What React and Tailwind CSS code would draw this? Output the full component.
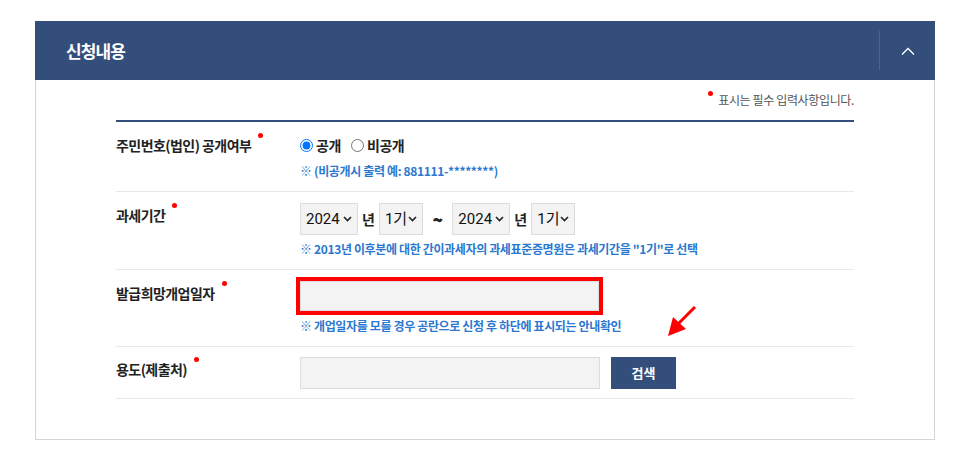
import {useState} from 'react';

const KR = "font-['Noto_Sans_CJK_KR',sans-serif]";

function Req() {
  return <span className="relative -top-[10px] ml-[7px] inline-block h-[5px] w-[5px] rounded-full bg-[#ff0000]" />;
}

function Label({children}) {
  return (
    <div className="flex h-[24px] items-center text-[14px] font-bold tracking-[-0.04em] text-[#222]">
      {children}
      <Req />
    </div>
  );
}

function Hint({children}) {
  return <p className="mt-[5px] text-[12px] font-bold leading-[18px] tracking-[-0.03em] text-[#2b78d0]">{children}</p>;
}

function Select({value, options, width}) {
  return (
    <label className={`relative inline-flex h-[32px] ${width}`}>
      <select
        defaultValue={value}
        className="h-full w-full appearance-none border border-[#dcdcdc] bg-[#f3f3f3] pl-[5px] font-['Roboto','Noto_Sans_CJK_KR',sans-serif] text-[15px] font-normal tracking-normal text-[#111] outline-none"
      >
        {options.map((o) => (
          <option key={o}>{o}</option>
        ))}
      </select>
      <svg className="pointer-events-none absolute right-[6px] top-[13px]" width="9" height="6" viewBox="0 0 9 6">
        <path d="M1 1l3.5 3.5L8 1" fill="none" stroke="#222" strokeWidth="1.6" />
      </svg>
    </label>
  );
}

function Row({label, children, className = 'py-[11px]'}) {
  return (
    <div className={`grid grid-cols-[184px_1fr] border-b border-[#e8e8e8] ${className}`}>
      <Label>{label}</Label>
      <div>{children}</div>
    </div>
  );
}

export default function App() {
  const [open, setOpen] = useState('yes');
  return (
    <div className={`min-h-[465px] bg-white pt-[21px] ${KR}`}>
      <section className="mx-[35px] w-[900px]">
        <header className="flex h-[59px] items-center bg-[#344e7b] pl-[31px]">
          <h2 className="flex-1 text-[17px] font-bold tracking-[-0.05em] text-white">신청내용</h2>
          <div className="h-[39px] w-px bg-[#4b6591]" />
          <button className="flex h-full w-[55px] items-center justify-center">
            <svg width="14" height="8" viewBox="0 0 14 8">
              <path d="M1 7.5L7 1.5l6 6" fill="none" stroke="#fff" strokeWidth="1.3" />
            </svg>
          </button>
        </header>

        <div className="border border-t-0 border-[#d5d5d5] px-[80px] pb-[40px]">
          <div className="flex h-[42px] items-center justify-end border-b-2 border-[#344e7b] text-[12px] tracking-[-0.03em] text-[#555]">
            <span className="relative -top-[7px] mr-[5px] inline-block h-[5px] w-[5px] rounded-full bg-[#ff0000]" />
            표시는 필수 입력사항입니다.
          </div>

          <Row label="주민번호(법인) 공개여부">
            <div className="flex h-[24px] items-center text-[14px] font-bold tracking-[-0.03em] text-[#222]">
              <label className="mr-[10px] flex items-center gap-[3px]">
                <input type="radio" name="pub" checked={open === 'yes'} onChange={() => setOpen('yes')} className="m-0 h-[13px] w-[13px]" />
                공개
              </label>
              <label className="flex items-center gap-[3px]">
                <input type="radio" name="pub" checked={open === 'no'} onChange={() => setOpen('no')} className="m-0 h-[13px] w-[13px]" />
                비공개
              </label>
            </div>
            <Hint>※ (비공개시 출력 예: 881111-********)</Hint>
          </Row>

          <Row label="과세기간">
            <div className="flex h-[32px] items-center text-[14px] font-bold text-[#222]">
              <Select value="2024" options={['2024', '2023', '2022']} width="w-[58px]" />
              <span className="mx-[4px]">년</span>
              <Select value="1기" options={['1기', '2기']} width="w-[44px]" />
              <span className="mx-[10px] text-[16px] font-bold [-webkit-text-stroke:0.9px_#222]">~</span>
              <Select value="2024" options={['2024', '2023', '2022']} width="w-[58px]" />
              <span className="mx-[4px]">년</span>
              <Select value="1기" options={['1기', '2기']} width="w-[44px]" />
            </div>
            <Hint>※ 2013년 이후분에 대한 간이과세자의 과세표준증명원은 과세기간을 "1기"로 선택</Hint>
          </Row>

          <Row label="발급희망개업일자">
            <div className="flex items-start">
              <input className="h-[30px] w-[299px] border border-[#dcdcdc] bg-[#f3f3f3] outline-4 outline-[#ff0000]" />
              <svg className="ml-[68px] mt-[25px]" width="30" height="32" viewBox="0 0 30 32">
                <path d="M28 1L10 19" stroke="#ff0000" strokeWidth="3" />
                <path d="M1 30L6 11l13 12z" fill="#ff0000" />
              </svg>
            </div>
            <Hint>
              <span className="-mt-[26px] block">※ 개업일자를 모를 경우 공란으로 신청 후 하단에 표시되는 안내확인</span>
            </Hint>
          </Row>

          <Row label="용도(제출처)" className="pb-[9px] pt-[10px]">
            <div className="flex items-center">
              <input className="h-[32px] w-[300px] border border-[#dcdcdc] bg-[#f3f3f3] outline-none" />
              <button className="ml-[11px] h-[32px] w-[65px] bg-[#344e7b] text-[13px] font-bold text-white">검색</button>
            </div>
          </Row>
        </div>
      </section>
    </div>
  );
}
